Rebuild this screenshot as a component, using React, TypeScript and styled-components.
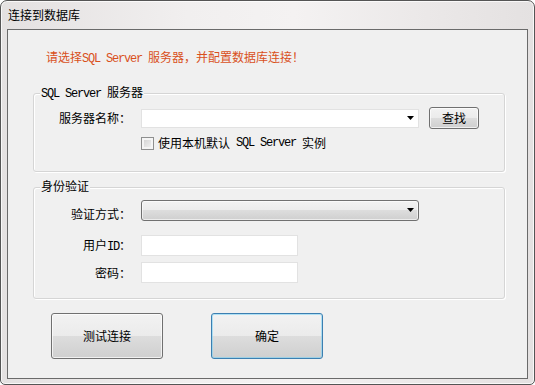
import React from "react";
import styled, { createGlobalStyle } from "styled-components";

const GlobalStyle = createGlobalStyle`
  html, body {
    margin: 0;
    padding: 0;
    background: #fff;
  }
  body {
    font-family: "Noto Sans CJK SC", "Liberation Sans", sans-serif;
    font-size: 12px;
    color: #000;
  }
  * {
    box-sizing: border-box;
  }
`;

const Window = styled.div`
  width: 535px;
  height: 385px;
  display: flex;
  flex-direction: column;
  border: 1px solid #555;
  border-radius: 7px 7px 5px 5px;
  background: linear-gradient(
    to right,
    #e4e1e1,
    #f1efef 35%,
    #f4f2f2 55%,
    #ebe8e8 80%,
    #e4e1e1
  );
  box-shadow: inset 0 0 0 1px rgba(255, 255, 255, 0.75);
  overflow: hidden;
`;

const TitleBar = styled.div`
  height: 28px;
  flex: none;
  display: flex;
  align-items: center;
  padding-left: 7px;
  line-height: 14px;
`;

const Client = styled.div`
  margin: 0 6px;
  height: 350px;
  flex: none;
  border: 1px solid #6a6a6a;
  background: #f0f0f0;
  padding-left: 25px;
  display: flex;
  flex-direction: column;
`;

// half-width latin runs, like the bitmap font of the original dialog
const Mono = styled.span`
  font-family: "Liberation Mono", "Noto Sans CJK SC", monospace;
  font-size: 12px;
  letter-spacing: -1.2px;
  white-space: pre;
`;

const Message = styled.div`
  margin-top: 20px;
  padding-left: 13px;
  color: #d9501c;
  line-height: 14px;
  white-space: nowrap;
`;

const Group = styled.div<{ $h: number; $mt: number; $pt: number }>`
  position: relative;
  width: 472px;
  height: ${(p) => p.$h}px;
  margin-top: ${(p) => p.$mt}px;
  padding-top: ${(p) => p.$pt}px;
  border: 1px solid #d5d5d5;
  border-radius: 3px;
  box-shadow: inset 1px 1px 0 #fff, 1px 1px 0 #fff;
  display: flex;
  flex-direction: column;
`;

const Legend = styled.span`
  position: absolute;
  top: -9px;
  left: 6px;
  padding: 0 1px;
  background: #f0f0f0;
  line-height: 14px;
  white-space: nowrap;
`;

const Row = styled.div<{ $mt?: number; $pl?: number }>`
  display: flex;
  align-items: center;
  margin-top: ${(p) => p.$mt ?? 0}px;
  padding-left: ${(p) => p.$pl ?? 0}px;
`;

const Label = styled.div<{ $drop?: boolean }>`
  width: 97px;
  margin-right: 10px;
  text-align: right;
  line-height: 14px;
  white-space: nowrap;
  padding-top: ${(p) => (p.$drop ? 8 : 0)}px;
`;

const ComboBox = styled.div`
  width: 278px;
  height: 19px;
  background: #fff;
  border: 1px solid #e2e2e2;
  display: flex;
  align-items: center;
  justify-content: flex-end;
  padding-right: 4px;
`;

const DropList = styled.div`
  width: 278px;
  height: 21px;
  border: 1px solid #707070;
  border-radius: 3px;
  background: linear-gradient(#f2f2f2, #ebebeb 50%, #dddddd 50%, #cfcfcf);
  box-shadow: inset 0 0 0 1px rgba(255, 255, 255, 0.6);
  display: flex;
  align-items: center;
  justify-content: flex-end;
  padding-right: 4px;
`;

const TextBox = styled.div`
  width: 157px;
  height: 21px;
  background: #fff;
  border: 1px solid #e2e2e2;
`;

const PushButton = styled.div<{ $w: number; $h: number; $default?: boolean }>`
  width: ${(p) => p.$w}px;
  height: ${(p) => p.$h}px;
  flex: none;
  display: flex;
  align-items: center;
  justify-content: center;
  line-height: 14px;
  border: 1px solid ${(p) => (p.$default ? "#3c7fb1" : "#707070")};
  border-radius: 3px;
  background: linear-gradient(#f2f2f2, #ebebeb 50%, #dddddd 50%, #cfcfcf);
  box-shadow: inset 0 0 0 1px
    ${(p) => (p.$default ? "rgba(120, 210, 245, 0.55)" : "rgba(255, 255, 255, 0.7)")};
`;

const FindButton = styled(PushButton)`
  margin-left: 10px;
`;

const CheckRow = styled(Row)`
  line-height: 14px;
  white-space: nowrap;
`;

const CheckBox = styled.span`
  width: 13px;
  height: 13px;
  margin-right: 4px;
  border: 1px solid #8e8f8f;
  background: linear-gradient(135deg, #cfcfcf, #f6f6f6);
  box-shadow: inset 0 0 0 2px #f5f5f5;
`;

const ButtonRow = styled.div`
  display: flex;
  gap: 48px;
  margin-top: 14px;
  padding-left: 18px;
`;

const Arrow = () => (
  <svg width="7" height="4" viewBox="0 0 7 4">
    <polygon points="0,0 7,0 3.5,4" fill="#000" />
  </svg>
);

export default function App() {
  return (
    <>
      <GlobalStyle />
      <Window>
        <TitleBar>连接到数据库</TitleBar>
        <Client>
          <Message>
            请选择<Mono>{"SQL Server "}</Mono>服务器，并配置数据库连接！
          </Message>

          <Group $h={79} $mt={27} $pt={13}>
            <Legend>
              <Mono>{"SQL Server "}</Mono>服务器
            </Legend>
            <Row>
              <Label>服务器名称：</Label>
              <ComboBox>
                <Arrow />
              </ComboBox>
              <FindButton $w={50} $h={22}>
                查找
              </FindButton>
            </Row>
            <CheckRow $mt={7} $pl={107}>
              <CheckBox />
              使用本机默认<Mono>{" SQL Server "}</Mono>实例
            </CheckRow>
          </Group>

          <Group $h={112} $mt={15} $pt={11}>
            <Legend>身份验证</Legend>
            <Row>
              <Label $drop>验证方式：</Label>
              <DropList>
                <Arrow />
              </DropList>
            </Row>
            <Row $mt={14}>
              <Label>
                用户<Mono>ID</Mono>：
              </Label>
              <TextBox />
            </Row>
            <Row $mt={6}>
              <Label>密码：</Label>
              <TextBox />
            </Row>
          </Group>

          <ButtonRow>
            <PushButton $w={112} $h={46}>
              测试连接
            </PushButton>
            <PushButton $w={112} $h={46} $default>
              确定
            </PushButton>
          </ButtonRow>
        </Client>
      </Window>
    </>
  );
}
